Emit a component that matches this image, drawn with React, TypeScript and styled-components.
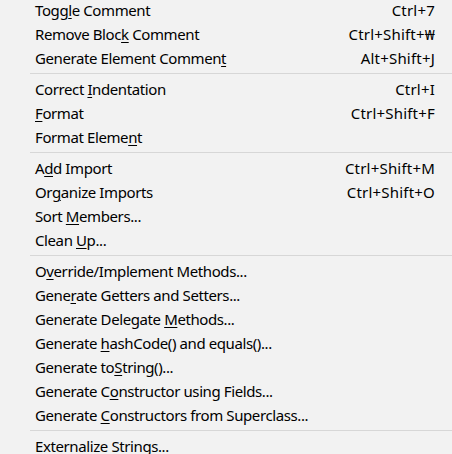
import styled, { createGlobalStyle } from 'styled-components'

const GlobalStyle = createGlobalStyle`
  html, body {
    margin: 0;
    padding: 0;
    background: #f2f2f2;
  }
`

type Entry =
  | { type: 'item'; label: string; key: number; accel?: string }
  | { type: 'sep' }

const ENTRIES: Entry[] = [
  { type: 'item', label: 'Toggle Comment', key: 4, accel: 'Ctrl+7' },
  { type: 'item', label: 'Remove Block Comment', key: 11, accel: 'Ctrl+Shift+\u20A9' },
  { type: 'item', label: 'Generate Element Comment', key: 23, accel: 'Alt+Shift+J' },
  { type: 'sep' },
  { type: 'item', label: 'Correct Indentation', key: 8, accel: 'Ctrl+I' },
  { type: 'item', label: 'Format', key: 0, accel: 'Ctrl+Shift+F' },
  { type: 'item', label: 'Format Element', key: 12 },
  { type: 'sep' },
  { type: 'item', label: 'Add Import', key: 1, accel: 'Ctrl+Shift+M' },
  { type: 'item', label: 'Organize Imports', key: 2, accel: 'Ctrl+Shift+O' },
  { type: 'item', label: 'Sort Members...', key: 5 },
  { type: 'item', label: 'Clean Up...', key: 6 },
  { type: 'sep' },
  { type: 'item', label: 'Override/Implement Methods...', key: 1 },
  { type: 'item', label: 'Generate Getters and Setters...', key: 4 },
  { type: 'item', label: 'Generate Delegate Methods...', key: 18 },
  { type: 'item', label: 'Generate hashCode() and equals()...', key: 9 },
  { type: 'item', label: 'Generate toString()...', key: 11 },
  { type: 'item', label: 'Generate Constructor using Fields...', key: 10 },
  { type: 'item', label: 'Generate Constructors from Superclass...', key: 9 },
  { type: 'sep' },
  { type: 'item', label: 'Externalize Strings...', key: 0 },
]

const Menu = styled.div`
  width: 452px;
  height: 454px;
  overflow: hidden;
  background: #f2f2f2;
  font-family: 'Noto Sans', 'Open Sans', sans-serif;
  font-size: 15px;
  letter-spacing: -0.4px;
  color: #000;
  display: flex;
  flex-direction: column;
`

const List = styled.div`
  margin-top: -1px;
  display: flex;
  flex-direction: column;
`

const Row = styled.div`
  box-sizing: border-box;
  height: 24px;
  display: flex;
  align-items: center;
  justify-content: space-between;
  padding: 0 17px 2px 35px;
  white-space: nowrap;
  line-height: 22px;
`

const Label = styled.span``

const Accel = styled.span`
  letter-spacing: 0.2px;
`

const Mnemonic = styled.span`
  text-decoration: underline;
  text-underline-offset: 2px;
  text-decoration-thickness: 1px;
`

const Separator = styled.div`
  height: 7px;
  display: flex;
  flex-direction: column;
  padding-left: 30px;

  &::after {
    content: '';
    margin-top: 2px;
    height: 1px;
    background: #d7d7d7;
  }
`

const renderLabel = (label: string, key: number) => (
  <Label>
    {label.slice(0, key)}
    <Mnemonic>{label[key]}</Mnemonic>
    {label.slice(key + 1)}
  </Label>
)

const App = () => {
  return (
    <Menu>
      <GlobalStyle />
      <List>
        {ENTRIES.map((e, i) =>
          e.type === 'sep' ? (
            <Separator key={i} />
          ) : (
            <Row key={i}>
              {renderLabel(e.label, e.key)}
              {e.accel && <Accel>{e.accel}</Accel>}
            </Row>
          )
        )}
      </List>
    </Menu>
  )
}

export default App
